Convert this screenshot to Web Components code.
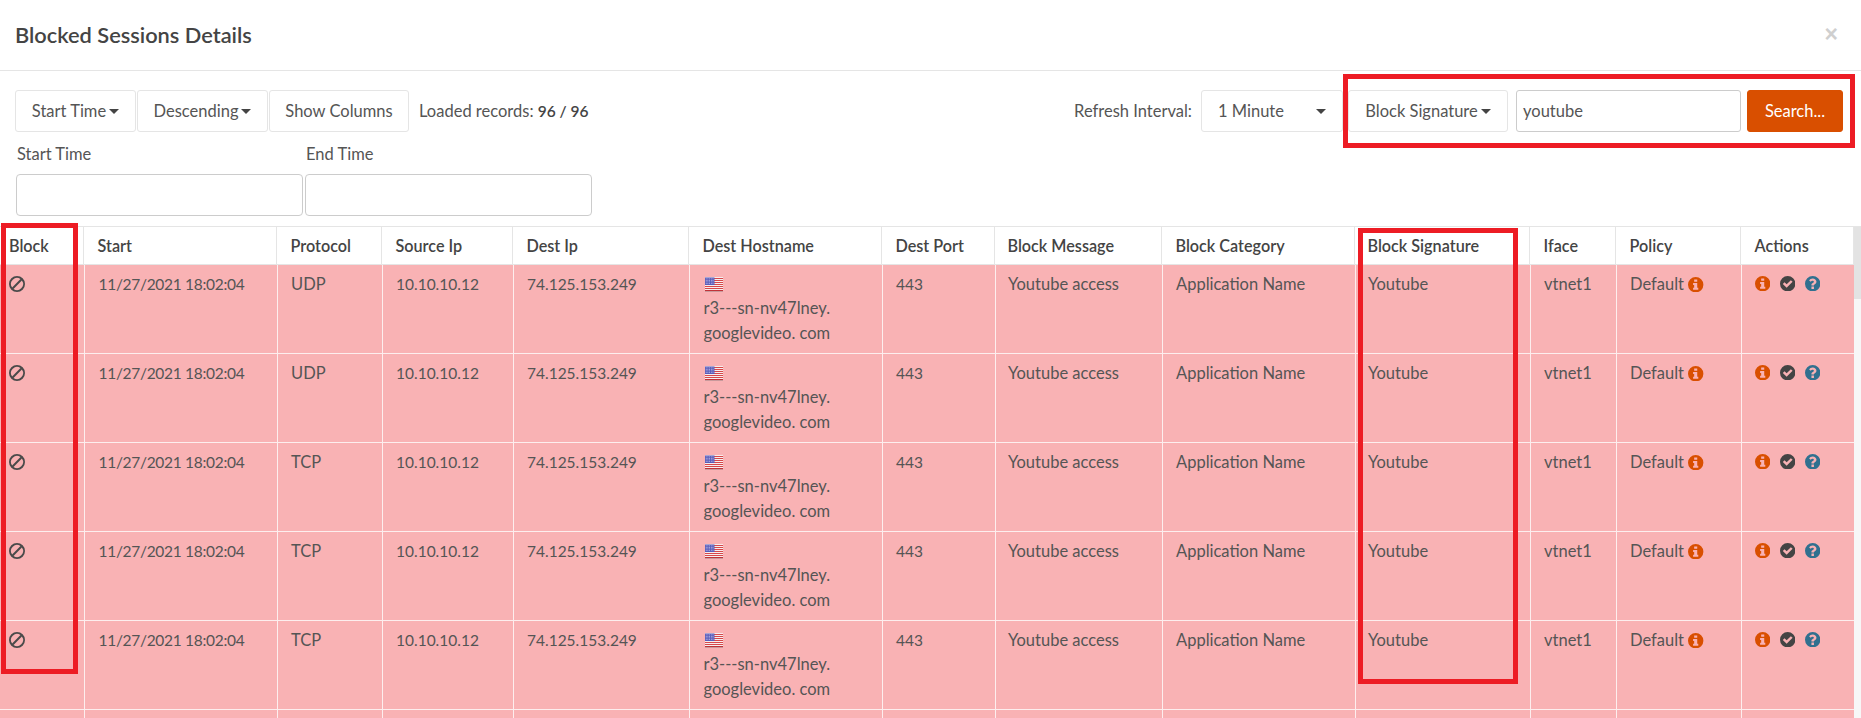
<!DOCTYPE html>
<html lang="en">
<head>
<meta charset="utf-8">
<title>Blocked Sessions Details</title>
<style>
  html, body { margin: 0; height: 718px; overflow: hidden; background: #fff; }
  body { font-family: Lato, "Liberation Sans", sans-serif; font-size: 16.5px; color: #555; position: relative; }
</style>
</head>
<body>
<modal-header>Blocked Sessions Details</modal-header>
<session-toolbar></session-toolbar>
<date-filters></date-filters>
<session-table></session-table>
<red-outline box="1,223,78,674"></red-outline>
<red-outline box="1358,228,1518,684"></red-outline>
<red-outline box="1343,74,1855,148"></red-outline>

<script>
const ICONS = {
  ban: `<path fill-rule="evenodd" d="M8 0a8 8 0 1 1 0 16A8 8 0 0 1 8 0zM3.11 11.47 11.47 3.11A6 6 0 0 0 3.11 11.47zM4.53 12.89A6 6 0 0 0 12.89 4.53z"/>`,
  info: `<path fill-rule="evenodd" d="M8 0a8 8 0 1 1 0 16A8 8 0 0 1 8 0zM6.4 2.6v2.4h3.2V2.6zM5.3 6.3v1.9h1.1v3.1H5.3v2h5.4v-2H9.6V6.3z"/>`,
  check: `<path fill-rule="evenodd" d="M8 0a8 8 0 1 1 0 16A8 8 0 0 1 8 0zM2.9 8.2 6.9 12.3 13.1 6 11.3 4.3 6.9 8.7 4.7 6.4z"/>`,
  question: `<path fill-rule="evenodd" d="M8 0a8 8 0 1 1 0 16A8 8 0 0 1 8 0zM6.7 10.9v2.5h2.6v-2.5zM8.1 2.6C6.3 2.6 5 3.5 4.3 4.8L6 6.1C6.5 5.4 7 5 7.8 5 8.6 5 9.2 5.4 9.2 6 9.2 6.6 8.7 6.9 8 7.3 7.2 7.8 6.7 8.4 6.7 9.4V10h2.6v-.4C9.3 9.1 9.6 8.9 10.3 8.5 11.1 8 11.9 7.2 11.9 6 11.9 3.9 10 2.6 8.1 2.6z"/>`
};

class FaIcon extends HTMLElement {
  connectedCallback() {
    const name = this.getAttribute('name');
    const color = this.getAttribute('color') || '#444';
    const size = this.getAttribute('size') || 15.4;
    this.attachShadow({ mode: 'open' }).innerHTML = `<style>
        :host { display: inline-flex; vertical-align: -2px; }
        svg { display: block; width: ${size}px; height: ${size}px; fill: ${color}; }
      </style>
      <svg viewBox="0 0 16 16">${ICONS[name]}</svg>`;
  }
}
customElements.define('fa-icon', FaIcon);

class UsFlag extends HTMLElement {
  constructor() {
    super();
    let stripes = '';
    for (let i = 0; i < 7; i++) {
      stripes += `<rect x="0" y="${1 + i * 2}" width="18" height="1" fill="#d8474a"/>`;
    }
    let dots = '';
    for (let r = 0; r < 4; r++) {
      for (let c = 0; c < 5; c++) {
        dots += `<rect x="${0.8 + c * 1.7}" y="${1.5 + r * 1.5}" width=".8" height=".8" fill="#c9c9f0"/>`;
      }
    }
    this.attachShadow({ mode: 'open' }).innerHTML = `<style>
        :host { display: block; width: 18px; height: 15px; margin-left: 1px; }
        svg { display: block; }
      </style>
      <svg width="18" height="15" viewBox="0 0 18 15">
        <rect y="0" width="18" height="13" fill="#f6eeee"/>
        ${stripes}
        <rect y="13" width="18" height="1" fill="#c23238"/>
        <rect y="14" width="18" height="1" fill="#c99a9c"/>
        <rect x="0" y="0.5" width="9.5" height="7.5" fill="#5a5cb8"/>
        ${dots}
      </svg>`;
  }
}
customElements.define('us-flag', UsFlag);

class ModalHeader extends HTMLElement {
  constructor() {
    super();
    this.attachShadow({ mode: 'open' }).innerHTML = `<style>
        :host { display: flex; justify-content: space-between; align-items: center; box-sizing: border-box;
                height: 71px; padding: 0 15px 1px; border-bottom: 1px solid #e5e5e5; }
        h4 { margin: 0; font-size: 21.8px; font-weight: 600; color: #444; }
        span { font-family: "Liberation Sans", sans-serif; font-size: 23px; font-weight: 700; color: #cfcfcf; margin-right: 8px; }
      </style>
      <h4><slot></slot></h4><span>×</span>`;
  }
}
customElements.define('modal-header', ModalHeader);

class ToolBtn extends HTMLElement {
  constructor() {
    super();
    this.attachShadow({ mode: 'open' }).innerHTML = `<style>
        :host { display: inline-flex; box-sizing: border-box; height: 42px; align-items: center; justify-content: center;
                border: 1px solid #e5e5e5; border-radius: 3px; color: #555; background: #fff; white-space: nowrap; }
        :host([primary]) { background: #d94f00; border-color: #d94f00; color: #fff; }
        i { width: 0; height: 0; margin-left: 3px; border: 5px solid transparent; border-top-color: #444; border-bottom: 0; }
        :host(:not([caret])) i { display: none; }
      </style>
      <slot></slot><i></i>`;
  }
}
customElements.define('tool-btn', ToolBtn);

class SessionToolbar extends HTMLElement {
  constructor() {
    super();
    this.attachShadow({ mode: 'open' }).innerHTML = `<style>
        :host { display: flex; justify-content: space-between; align-items: center; height: 42px;
                margin-top: 19px; padding: 0 18px 0 15px; }
        .side { display: flex; align-items: center; }
        b { font-weight: 600; color: #444; font-size: 15.5px; }
        .loaded { margin-left: 10px; }
        .label { margin-right: 9px; }
        .select { box-sizing: border-box; width: 142px; height: 42px; display: flex; align-items: center; justify-content: space-between;
                  padding: 0 16px; border: 1px solid #e5e5e5; border-radius: 3px; margin-right: 5px; }
        .select i { width: 0; height: 0; border: 5px solid transparent; border-top-color: #444; border-bottom: 0; }
        .term { box-sizing: border-box; width: 225px; height: 42px; display: flex; align-items: center; padding: 0 6px;
                margin: 0 6px 0 8px; border: 1px solid #ccc; border-radius: 3px; }
      </style>
      <div class="side">
        <tool-btn caret style="width:121px;margin-right:1px">Start Time</tool-btn>
        <tool-btn caret style="width:131px;margin-right:1px">Descending</tool-btn>
        <tool-btn style="width:140px">Show Columns</tool-btn>
        <span class="loaded">Loaded records: <b>96 / 96</b></span>
      </div>
      <div class="side">
        <span class="label">Refresh Interval:</span>
        <div class="select">1 Minute<i></i></div>
        <tool-btn caret style="width:160px">Block Signature</tool-btn>
        <div class="term">youtube</div>
        <tool-btn primary style="width:96px">Search...</tool-btn>
      </div>`;
  }
}
customElements.define('session-toolbar', SessionToolbar);

class DateFilters extends HTMLElement {
  constructor() {
    super();
    this.attachShadow({ mode: 'open' }).innerHTML = `<style>
        :host { display: flex; gap: 2px; padding-left: 16px; margin-top: 11px; }
        label { display: block; width: 287px; }
        span { display: block; height: 31px; line-height: 23px; padding-left: 1px; }
        div { box-sizing: border-box; height: 42px; border: 1px solid #ccc; border-radius: 4px; background: #fff; }
      </style>
      <label><span>Start Time</span><div></div></label>
      <label><span>End Time</span><div></div></label>`;
  }
}
customElements.define('date-filters', DateFilters);

const COLUMNS = ['Block', 'Start', 'Protocol', 'Source Ip', 'Dest Ip', 'Dest Hostname', 'Dest Port',
  'Block Message', 'Block Category', 'Block Signature', 'Iface', 'Policy', 'Actions'];
// right edge of each column, the body sits one pixel to the right of the head
const EDGES = [84, 277, 382, 513, 689, 882, 995, 1162, 1355, 1530, 1616, 1741, 1854];
const tracks = (edges) => edges.map((e, i) => (e - (edges[i - 1] || 0)) + 'px').join(' ');
const BODY_EDGES = EDGES.map((e, i) => i < 12 ? e + 1 : e);

class SessionRow extends HTMLElement {
  constructor() {
    super();
    this.attachShadow({ mode: 'open' }).innerHTML = `<style>
        :host { display: grid; grid-template-columns: ${tracks(BODY_EDGES)}; box-sizing: border-box; height: 89px;
                background: #f9b2b4; border-bottom: 1px solid #fdeeee; line-height: 24.5px; color: #555; }
        div { box-sizing: border-box; border-right: 1px solid #fdeeee; padding: 7px 4px 0 13px; white-space: nowrap; }
        div:last-child { border-right: 0; }
        .num { font-size: 15.5px; }
        .date { font-size: 15.5px; letter-spacing: -.3px; padding-left: 13.5px; }
        .tight { padding-left: 12px; }
        .first { display: flex; align-items: flex-start; padding: 11px 0 0 9px; }
        .host { padding-top: 12px; padding-left: 13.5px; }
        .host us-flag { margin-bottom: 4px; }
        .acts { display: flex; gap: 9.4px; align-items: flex-start; padding: 11px 0 0 13px; }
      </style>`;
  }
  // no protocol gives a row without content, for the strip cut by the window
  set protocol(p) {
    const cells = !p ? COLUMNS.map(() => '') : [
      `<fa-icon name="ban" size="16" color="#4a4a4a"></fa-icon>`, '11/27/2021 18:02:04', p, '10.10.10.12', '74.125.153.249',
      `<us-flag></us-flag>r3---sn-nv47lney.<br>googlevideo. com`, '443', 'Youtube access', 'Application Name',
      'Youtube', 'vtnet1', `Default <fa-icon name="info" color="#d94f00"></fa-icon>`,
      `<fa-icon name="info" color="#d94f00"></fa-icon><fa-icon name="check" color="#444"></fa-icon><fa-icon name="question" color="#31708f"></fa-icon>`
    ];
    const classes = { 0: 'first', 1: 'date', 3: 'num', 4: 'num', 5: 'host', 6: 'num', 7: 'tight', 9: 'tight', 12: 'acts' };
    cells.forEach((html, i) => {
      const td = document.createElement('div');
      td.innerHTML = html;
      if (p && classes[i]) td.className = classes[i];
      this.shadowRoot.appendChild(td);
    });
  }
}
customElements.define('session-row', SessionRow);

class SessionTable extends HTMLElement {
  constructor() {
    super();
    const heads = COLUMNS.map(c => `<div>${c}</div>`).join('');
    this.attachShadow({ mode: 'open' }).innerHTML = `<style>
        :host { display: flex; height: 492px; margin-top: 10px; border-top: 1px solid #e5e5e5; box-sizing: border-box; }
        .main { width: 1854px; flex: none; }
        .head { display: grid; grid-template-columns: ${tracks(EDGES)}; height: 38px; box-sizing: border-box;
                border-bottom: 1px solid #e5e5e5; }
        .head div { box-sizing: border-box; border-right: 1px solid #e5e5e5; padding-left: 13.5px; line-height: 37px;
                    font-weight: 600; color: #444; font-size: 16.2px; white-space: nowrap; }
        .head div:first-child { padding-left: 9px; }
        .head div:nth-child(8), .head div:nth-child(10) { padding-left: 12.5px; }
        .bar { flex: 1; background: #f7f7f7; }
        .bar div { height: 72px; background: #e3e3e3; }
      </style>
      <div class="main"><div class="head">${heads}</div><div id="rows"></div></div>
      <div class="bar"><div></div></div>`;
    const rows = this.shadowRoot.getElementById('rows');
    ['UDP', 'UDP', 'TCP', 'TCP', 'TCP', ''].forEach(p => {
      const r = document.createElement('session-row');
      r.protocol = p;
      if (!p) { r.style.height = '8px'; r.style.borderBottom = '0'; }
      rows.appendChild(r);
    });
  }
}
customElements.define('session-table', SessionTable);

// hand drawn annotation that lies over the page
class RedOutline extends HTMLElement {
  connectedCallback() {
    const [l, t, r, b] = this.getAttribute('box').split(',').map(Number);
    this.attachShadow({ mode: 'open' }).innerHTML = `<style>
        :host { position: absolute; left: ${l}px; top: ${t}px; width: ${r - l}px; height: ${b - t}px;
                box-sizing: border-box; border: 5px solid #ed1c24; pointer-events: none; }
      </style>`;
  }
}
customElements.define('red-outline', RedOutline);
</script>
</body>
</html>
